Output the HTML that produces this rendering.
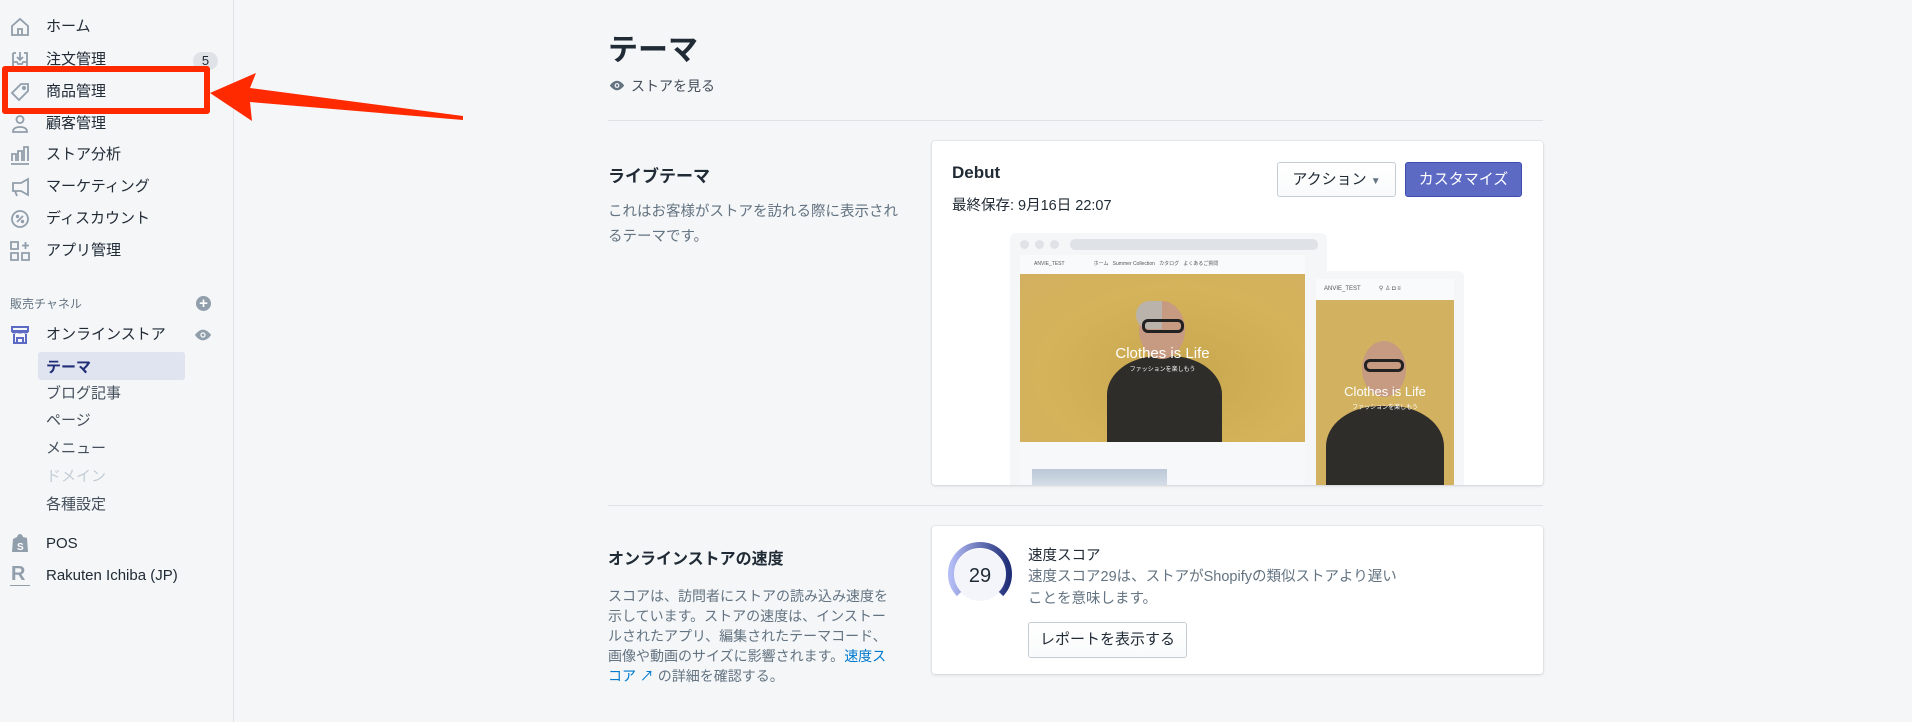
<!DOCTYPE html>
<html><head><meta charset="utf-8"><style>
*{margin:0;padding:0;box-sizing:border-box}
body{width:1912px;height:722px;background:#f4f6f8;font-family:"Liberation Sans","Noto Sans CJK JP",sans-serif;color:#212b36;position:relative;overflow:hidden}
.a{position:absolute;white-space:nowrap}
.side{position:absolute;left:0;top:0;width:234px;height:722px;border-right:1px solid #dfe3e8;background:#f4f6f8}
.nav{font-size:15px;color:#212b36;left:46px;line-height:20px}
.ic{position:absolute;left:10px;width:20px;height:20px}
.sub{font-size:15px;color:#454f5b;left:46px;line-height:20px}
.card{position:absolute;background:#fff;border-radius:3px;box-shadow:0 0 0 1px rgba(63,63,68,.05),0 1px 3px rgba(63,63,68,.15)}
.btn{position:absolute;border-radius:3px;font-size:15px;text-align:center;line-height:34px}
.gray{color:#637381}
</style></head><body>
<div class="side">
<svg class="ic" style="top:17px" viewBox="0 0 20 20" fill="none" stroke="#919eab" stroke-width="1.8"><path d="M2 9L10 2l8 7v9H2z M8 18v-6h4v6"/></svg>
<div class="a nav" style="top:17px">ホーム</div>
<svg class="ic" style="top:50px" viewBox="0 0 20 20" fill="none" stroke="#919eab" stroke-width="1.8"><path d="M3 3h3M14 3h3v15H3V3M10 2v8M7 7l3 3 3-3M3 12h4l1 2h4l1-2h4"/></svg>
<div class="a nav" style="top:50px">注文管理</div>
<div class="a" style="left:193px;top:52px;width:25px;height:18px;border-radius:9px;background:#dfe3e8;font-size:13px;text-align:center;line-height:18px">5</div>
<svg class="ic" style="top:82px" viewBox="0 0 20 20" fill="none" stroke="#919eab" stroke-width="1.8"><path d="M11 2h7v7L9 18 2 11z"/><circle cx="14" cy="6" r="1.2"/></svg>
<div class="a nav" style="top:82px">商品管理</div>
<svg class="ic" style="top:114px" viewBox="0 0 20 20" fill="none" stroke="#919eab" stroke-width="1.8"><circle cx="10" cy="5.5" r="3.5"/><path d="M3 18c0-4 3-5 7-5s7 1 7 5z"/></svg>
<div class="a nav" style="top:114px">顧客管理</div>
<svg class="ic" style="top:145px" viewBox="0 0 20 20" fill="none" stroke="#919eab" stroke-width="1.8"><path d="M1 19h18M2 16V9h4v7M8 16V6h4v10M14 16V2h4v14"/></svg>
<div class="a nav" style="top:145px">ストア分析</div>
<svg class="ic" style="top:177px" viewBox="0 0 20 20" fill="none" stroke="#919eab" stroke-width="1.8"><path d="M18 2v16L11 14H3V6h8zM5 14l2 5"/></svg>
<div class="a nav" style="top:177px">マーケティング</div>
<svg class="ic" style="top:209px" viewBox="0 0 20 20" fill="none" stroke="#919eab" stroke-width="1.8"><circle cx="10" cy="10" r="8"/><path d="M7 13l6-6"/><circle cx="7.5" cy="7.5" r=".8"/><circle cx="12.5" cy="12.5" r=".8"/></svg>
<div class="a nav" style="top:209px">ディスカウント</div>
<svg class="ic" style="top:241px" viewBox="0 0 20 20" fill="none" stroke="#919eab" stroke-width="1.8"><path d="M1 1h7v7H1zM1 12h7v7H1zM12 12h7v7h-7zM15.5 1v7M12 4.5h7"/></svg>
<div class="a nav" style="top:241px">アプリ管理</div>
<div class="a" style="left:10px;top:295px;font-size:12px;color:#637381">販売チャネル</div>
<div class="a" style="left:196px;top:296px;width:15px;height:15px;border-radius:50%;background:#919eab;color:#fff;font-size:15px;line-height:15px;text-align:center;font-weight:bold">+</div>
<svg class="ic" style="top:325px" viewBox="0 0 20 20" fill="none" stroke="#5c6ac4" stroke-width="2"><path d="M2 2h16v4H2zM2 6c0 2 5 2 5 0 0 2 6 2 6 0 0 2 5 2 5 0M4 9v9h12V9M7 18v-5h6v5"/></svg>
<div class="a nav" style="top:325px">オンラインストア</div>
<svg class="a" style="left:194px;top:327px" width="18" height="16" viewBox="0 0 20 16"><path d="M10 2C5 2 1 8 1 8s4 6 9 6 9-6 9-6-4-6-9-6z" fill="#919eab"/><circle cx="10" cy="8" r="3" fill="#f4f6f8"/><circle cx="10" cy="8" r="1.5" fill="#919eab"/></svg>
<div class="a" style="left:38px;top:352px;width:147px;height:28px;border-radius:3px;background:#e0e4f1"></div>
<div class="a" style="left:46px;top:356px;font-size:15px;font-weight:bold;color:#202e78">テーマ</div>
<div class="a sub" style="top:384px">ブログ記事</div>
<div class="a sub" style="top:411px">ページ</div>
<div class="a sub" style="top:439px">メニュー</div>
<div class="a sub" style="top:467px;color:#c4cdd5">ドメイン</div>
<div class="a sub" style="top:495px">各種設定</div>
<svg class="ic" style="top:533px" viewBox="0 0 20 20"><path d="M3 6l4-2c1-4 5-4 6 0l4 1 1 14H2z" fill="#919eab"/><text x="7" y="17" font-size="10" fill="#fff" font-weight="bold" font-family="Liberation Sans">S</text></svg>
<div class="a nav" style="top:534px">POS</div>
<div class="a" style="left:11px;top:563px;font-size:20px;font-weight:bold;color:#919eab">R</div>
<div class="a" style="left:10px;top:585px;width:20px;height:1px;background:#919eab"></div>
<div class="a nav" style="top:566px">Rakuten Ichiba (JP)</div>
</div>
<div class="a" style="left:2px;top:66px;width:208px;height:48px;border:6px solid #ff2a00;border-radius:3px"></div>
<svg class="a" style="left:200px;top:68px" width="270" height="60"><polygon points="10,25 56,5 50,20 263,48 263,52 50,34 52,53" fill="#ff2a00"/></svg>

<div class="a" style="left:608px;top:25px;font-size:30px;font-weight:bold">テーマ</div>
<svg class="a" style="left:609px;top:79px" width="16" height="13" viewBox="0 0 20 16"><path d="M10 2C5 2 1 8 1 8s4 6 9 6 9-6 9-6-4-6-9-6z" fill="#637381"/><circle cx="10" cy="8" r="3" fill="#f4f6f8"/><circle cx="10" cy="8" r="1.5" fill="#637381"/></svg>
<div class="a" style="left:631px;top:76px;font-size:14px;color:#454f5b">ストアを見る</div>
<div class="a" style="left:608px;top:120px;width:935px;height:1px;background:#dfe3e8"></div>
<div class="a" style="left:608px;top:162px;font-size:17px;font-weight:bold">ライブテーマ</div>
<div class="a gray" style="left:608px;top:200px;font-size:14.5px;line-height:25px;white-space:normal;width:300px">これはお客様がストアを訪れる際に表示されるテーマです。</div>

<div class="card" style="left:932px;top:141px;width:611px;height:344px;overflow:hidden">
<div class="a" style="left:20px;top:22px;font-size:17px;font-weight:bold">Debut</div>
<div class="a" style="left:20px;top:53px;font-size:14.5px">最終保存: 9月16日 22:07</div>
<div class="btn" style="left:345px;top:21px;width:119px;height:35px;border:1px solid #c4cdd5;background:linear-gradient(#fff,#f9fafb);color:#212b36">アクション <span style="font-size:10px;color:#637381">▼</span></div>
<div class="btn" style="left:473px;top:21px;width:117px;height:35px;background:#5c6ac4;color:#fff;border:1px solid #3f4eae">カスタマイズ</div>
<div class="a" style="left:78px;top:92px;width:317px;height:260px;background:#f4f6f8;border-radius:6px"></div>
<div class="a" style="left:88px;top:99px;width:9px;height:9px;border-radius:50%;background:#dfe3e8"></div>
<div class="a" style="left:103px;top:99px;width:9px;height:9px;border-radius:50%;background:#dfe3e8"></div>
<div class="a" style="left:118px;top:99px;width:9px;height:9px;border-radius:50%;background:#dfe3e8"></div>
<div class="a" style="left:138px;top:98px;width:248px;height:11px;border-radius:5px;background:#dfe3e8"></div>
<div class="a" style="left:88px;top:114px;width:285px;height:19px;background:#f9fafb;font-size:5px;color:#555;line-height:19px;padding-left:14px">ANVIE_TEST &nbsp;&nbsp;&nbsp;&nbsp;&nbsp;&nbsp;&nbsp;&nbsp;&nbsp;&nbsp;&nbsp;&nbsp;&nbsp;&nbsp;&nbsp;&nbsp;&nbsp;&nbsp;&nbsp; ホーム &nbsp; Summer Collection &nbsp; カタログ &nbsp; よくあるご質問</div>
<div class="a" style="left:88px;top:133px;width:285px;height:168px;background:radial-gradient(ellipse at 55% 60%,#c8a64e,#d5b35a 60%,#d2b060)"></div>
<div class="a" style="left:175px;top:215px;width:115px;height:86px;border-radius:45% 45% 0 0;background:#2f2d2a"></div>
<div class="a" style="left:207px;top:160px;width:46px;height:58px;border-radius:50%;background:#c79a82"></div>
<div class="a" style="left:204px;top:160px;width:26px;height:28px;border-radius:50% 0 0 50%;background:#b9b3ab"></div>
<div class="a" style="left:210px;top:178px;width:42px;height:14px;border:3px solid #222;border-radius:6px"></div>
<div class="a" style="left:88px;top:204px;width:285px;text-align:center;color:#fff;font-size:15px">Clothes is Life</div>
<div class="a" style="left:88px;top:223px;width:285px;text-align:center;color:#fff;font-size:6px">ファッションを楽しもう</div>
<div class="a" style="left:88px;top:301px;width:285px;height:52px;background:#f7f8f9"></div>
<div class="a" style="left:100px;top:328px;width:135px;height:20px;background:linear-gradient(#bcc8d8,#d9e1ea)"></div>
<div class="a" style="left:383px;top:130px;width:149px;height:230px;background:#f4f6f8;border-radius:6px"></div>
<div class="a" style="left:384px;top:138px;width:138px;height:21px;background:#f9fafb;font-size:6px;color:#555;line-height:21px;padding-left:8px">ANVIE_TEST &nbsp;&nbsp;&nbsp;&nbsp;&nbsp;&nbsp;&nbsp;&nbsp;&nbsp; ⚲ ♙ ◘ ≡</div>
<div class="a" style="left:384px;top:159px;width:138px;height:190px;background:#d2b160"></div>
<div class="a" style="left:394px;top:265px;width:118px;height:90px;border-radius:45% 45% 0 0;background:#2f2d2a"></div>
<div class="a" style="left:430px;top:200px;width:44px;height:56px;border-radius:50%;background:#c79a82"></div>
<div class="a" style="left:432px;top:218px;width:40px;height:13px;border:3px solid #222;border-radius:6px"></div>
<div class="a" style="left:384px;top:243px;width:138px;text-align:center;color:#fff;font-size:13px">Clothes is Life</div>
<div class="a" style="left:384px;top:261px;width:138px;text-align:center;color:#fff;font-size:6px">ファッションを楽しもう</div>
</div>

<div class="a" style="left:608px;top:505px;width:935px;height:1px;background:#dfe3e8"></div>
<div class="a" style="left:608px;top:545px;font-size:16px;font-weight:bold">オンラインストアの速度</div>
<div class="a gray" style="left:608px;top:586px;font-size:14px;line-height:20px">スコアは、訪問者にストアの読み込み速度を<br>示しています。ストアの速度は、インストー<br>ルされたアプリ、編集されたテーマコード、<br>画像や動画のサイズに影響されます。<span style="color:#007ace">速度ス</span><br><span style="color:#007ace">コア ↗</span> の詳細を確認する。</div>

<div class="card" style="left:932px;top:526px;width:611px;height:148px">
<svg class="a" style="left:15px;top:16px" width="66" height="66" viewBox="0 0 66 66"><defs><linearGradient id="g" x1="0" y1="0" x2="1" y2="0"><stop offset="0" stop-color="#b3bcf5"/><stop offset="1" stop-color="#202e78"/></linearGradient></defs><circle cx="33" cy="33" r="26" fill="#f4f5fa"/><path d="M12 52A29 29 0 1 1 54 52" fill="none" stroke="url(#g)" stroke-width="6"/><text x="33" y="40" text-anchor="middle" font-size="20" fill="#212b36" font-family="Liberation Sans">29</text></svg>
<div class="a" style="left:96px;top:18px;font-size:14.5px">速度スコア</div>
<div class="a gray" style="left:96px;top:40px;font-size:14.5px;line-height:22px">速度スコア29は、ストアがShopifyの類似ストアより遅い<br>ことを意味します。</div>
<div class="btn" style="left:96px;top:96px;width:159px;height:36px;border:1px solid #c4cdd5;background:linear-gradient(#fff,#f9fafb)">レポートを表示する</div>
</div>
</body></html>
